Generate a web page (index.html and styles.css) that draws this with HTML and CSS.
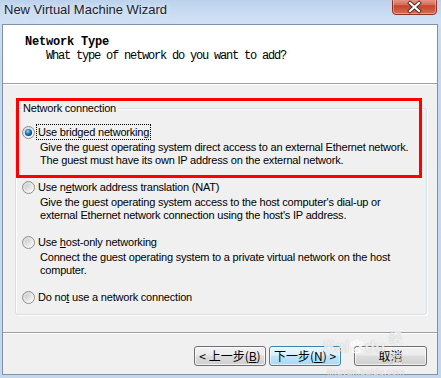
FILE: index.html
```html
<!DOCTYPE html>
<html>
<head>
<meta charset="utf-8">
<title>New Virtual Machine Wizard</title>
<link rel="stylesheet" href="styles.css">
</head>
<body>
<svg class="defs" width="0" height="0" aria-hidden="true">
  <defs>
    <linearGradient id="rOuter" x1="0" y1="0" x2="1" y2="1">
      <stop offset="0" stop-color="#d2d2d2"/>
      <stop offset="1" stop-color="#ffffff"/>
    </linearGradient>
    <linearGradient id="rInner" x1="0" y1="0" x2="1" y2="1">
      <stop offset="0" stop-color="#c9c9c9"/>
      <stop offset="1" stop-color="#f6f6f6"/>
    </linearGradient>
    <radialGradient id="rDot" cx="0.4" cy="0.35" r="0.7">
      <stop offset="0" stop-color="#9bdcfb"/>
      <stop offset="0.45" stop-color="#2a80c2"/>
      <stop offset="1" stop-color="#0b2f5c"/>
    </radialGradient>
    <linearGradient id="closeG" x1="0" y1="0" x2="0" y2="1">
      <stop offset="0" stop-color="#eab1a3"/>
      <stop offset="0.45" stop-color="#d86a55"/>
      <stop offset="0.5" stop-color="#c7432c"/>
      <stop offset="1" stop-color="#d6705b"/>
    </linearGradient>
  </defs>
</svg>
<div class="window">
  <div class="titlebar">
    <span class="title">New Virtual Machine Wizard</span>
    <div class="close">
      <svg width="45" height="15" viewBox="0 0 45 15">
        <rect x="0.5" y="-3" width="44" height="17.5" rx="3.5" fill="url(#closeG)" stroke="#8c3226"/>
        <rect x="1.5" y="-2" width="42" height="15.5" rx="2.5" fill="none" stroke="rgba(255,255,255,0.35)"/>
        <path d="M18 3 L27 11 M27 3 L18 11" stroke="#4a2a26" stroke-width="4" stroke-linecap="square"/>
        <path d="M18 3 L27 11 M27 3 L18 11" stroke="#ffffff" stroke-width="2.2" stroke-linecap="square"/>
      </svg>
    </div>
  </div>
  <div class="client">
    <div class="header">
      <div class="h-title">Network Type</div>
      <div class="h-sub">What type of network do you want to add?</div>
    </div>
    <div class="body">
      <fieldset class="group">
        <legend>Network connection</legend>
        <div class="opt">
          <div class="opt-row">
            <svg class="radio" width="13" height="13" viewBox="0 0 13 13"><circle cx="6.5" cy="6.5" r="6" fill="url(#rOuter)" stroke="#8e8f8f"/><circle cx="6.5" cy="6.5" r="3.6" fill="url(#rDot)"/></svg>
            <span class="lbl focus">Use bridged networking</span>
          </div>
          <div class="desc">Give the guest operating system direct access to an external Ethernet network.<br>The guest must have its own IP address on the external network.</div>
        </div>
        <div class="opt">
          <div class="opt-row">
            <svg class="radio" width="13" height="13" viewBox="0 0 13 13"><circle cx="6.5" cy="6.5" r="6" fill="url(#rOuter)" stroke="#8e8f8f"/><circle cx="6.5" cy="6.5" r="3.6" fill="url(#rInner)"/></svg>
            <span class="lbl">Use n<u>e</u>twork address translation (NAT)</span>
          </div>
          <div class="desc">Give the guest operating system access to the host computer's dial-up or<br>external Ethernet network connection using the host's IP address.</div>
        </div>
        <div class="opt">
          <div class="opt-row">
            <svg class="radio" width="13" height="13" viewBox="0 0 13 13"><circle cx="6.5" cy="6.5" r="6" fill="url(#rOuter)" stroke="#8e8f8f"/><circle cx="6.5" cy="6.5" r="3.6" fill="url(#rInner)"/></svg>
            <span class="lbl">Use <u>h</u>ost-only networking</span>
          </div>
          <div class="desc">Connect the guest operating system to a private virtual network on the host<br>computer.</div>
        </div>
        <div class="opt">
          <div class="opt-row">
            <svg class="radio" width="13" height="13" viewBox="0 0 13 13"><circle cx="6.5" cy="6.5" r="6" fill="url(#rOuter)" stroke="#8e8f8f"/><circle cx="6.5" cy="6.5" r="3.6" fill="url(#rInner)"/></svg>
            <span class="lbl">Do no<u>t</u> use a network connection</span>
          </div>
        </div>
      </fieldset>
    </div>
    <div class="sep"></div>
    <div class="buttons">
      <div class="btn btn-back">&lt; 上一步(<u>B</u>)</div>
      <div class="btn btn-next">下一步(<u>N</u>) &gt;</div>
      <div class="btn btn-cancel">取消</div>
    </div>
  </div>
  <div class="annot"></div>
  <div class="watermark">
    <div class="wm-top">Bai<svg class="paw" width="16" height="16" viewBox="0 0 16 16"><g fill="none" stroke="rgba(255,255,255,0.8)" stroke-width="1.6"><ellipse cx="4" cy="5" rx="1.6" ry="2.2"/><ellipse cx="8" cy="3" rx="1.6" ry="2.2"/><ellipse cx="12" cy="5" rx="1.6" ry="2.2"/><path d="M4 13 Q8 6 12 13 Q8 15 4 13Z"/></g></svg>du <span class="wm-cn">经验</span></div>
    <div class="wm-url">jingyan.baidu.com</div>
  </div>
</div>
</body>
</html>
```

FILE: styles.css
```css
html, body {
  margin: 0;
  padding: 0;
}

body {
  width: 441px;
  height: 378px;
  overflow: hidden;
  background: #c2d6ed;
}

.defs {
  position: absolute;
  width: 0;
  height: 0;
}

.window {
  position: relative;
  width: 441px;
  height: 378px;
  background: linear-gradient(#bcd2ec 0, #cfe0f3 20px, #c6d9ef 60px, #c3d7ee 100%);
  display: flex;
  flex-direction: column;
}

.titlebar {
  height: 24px;
  display: flex;
  justify-content: space-between;
  align-items: flex-start;
  flex: none;
}

.title {
  font-family: "Liberation Sans", Arial, sans-serif;
  font-size: 13px;
  line-height: 20px;
  color: #1a2331;
  padding-left: 4px;
  text-shadow: 0 0 6px rgba(255, 255, 255, 0.9);
}

.close {
  margin-right: 4px;
  height: 15px;
  line-height: 0;
}

.client {
  margin: 0 3px 0 2px;
  height: 351px;
  box-sizing: border-box;
  border: 1px solid #7f93a8;
  background: #f0f0f0;
  display: flex;
  flex-direction: column;
  flex: none;
}

.header {
  height: 59px;
  box-sizing: border-box;
  background: #ffffff;
  border-bottom: 1px solid #a0a0a0;
  box-shadow: 0 1px 0 #ffffff;
  padding-top: 10px;
  font-family: "Liberation Mono", "Courier New", monospace;
  color: #000;
  flex: none;
}

.h-title {
  font-size: 12px;
  font-weight: bold;
  letter-spacing: -0.2px;
  line-height: 14px;
  padding-left: 22px;
}

.h-sub {
  font-size: 12px;
  letter-spacing: -1.2px;
  line-height: 14px;
  padding-left: 43px;
}

.body {
  height: 247px;
  box-sizing: border-box;
  margin-top: 1px;
  padding: 17px 10px 0 12px;
  flex: none;
}

.group {
  margin: 0;
  padding: 2px 0 10px 6px;
  border: 1px solid #d5dfe5;
  border-radius: 3px;
  box-shadow: inset 1px 1px 0 #ffffff, 1px 1px 0 #ffffff;
  height: 213px;
  box-sizing: border-box;
  font-family: "Liberation Sans", Arial, sans-serif;
  font-size: 11px;
  letter-spacing: -0.2px;
  color: #000;
}

.group legend {
  padding: 0 2px 0 1px;
  line-height: 13px;
}

.opt {
  margin-top: 7px;
}

.opt + .opt {
  margin-top: 12px;
}

.opt-row {
  display: flex;
  align-items: center;
  height: 16px;
}

.radio {
  flex: none;
  margin-right: 2px;
}

.lbl {
  line-height: 14px;
  padding: 0 1px;
}

.lbl.focus {
  outline: 1px dotted #000;
  outline-offset: 0;
}

.lbl u {
  text-underline-offset: 1px;
}

.desc {
  margin-top: 1px;
  padding-left: 18px;
  line-height: 13px;
}

.sep {
  height: 1px;
  background: #a0a0a0;
  border-bottom: 1px solid #ffffff;
  flex: none;
}

.buttons {
  display: flex;
  justify-content: flex-end;
  padding: 12px 10px 0 0;
}

.btn {
  height: 20px;
  box-sizing: border-box;
  border: 1px solid #707070;
  border-radius: 3px;
  background: linear-gradient(#f2f2f2 0, #ebebeb 45%, #dddddd 50%, #cfcfcf 100%);
  box-shadow: inset 0 0 0 1px rgba(255, 255, 255, 0.7);
  font-family: "Noto Sans CJK SC", "Liberation Sans", sans-serif;
  font-size: 12px;
  line-height: 18px;
  text-align: center;
  color: #000;
}

.btn u {
  text-underline-offset: 1px;
}

.btn-back {
  width: 72px;
}

.btn-next {
  width: 72px;
  margin-left: 3px;
  border-color: #3c7fb1;
  background: linear-gradient(#eaf6fd 0, #d9f0fc 45%, #bee6fd 50%, #a7d9f5 100%);
  box-shadow: inset 0 0 0 1px rgba(255, 255, 255, 0.6);
}

.btn-cancel {
  width: 73px;
  margin-left: 13px;
}

.annot {
  position: absolute;
  left: 16px;
  top: 98px;
  width: 406px;
  height: 80px;
  box-sizing: border-box;
  border: 3px solid #ff0000;
  pointer-events: none;
}

.watermark {
  position: absolute;
  left: 323px;
  top: 327px;
  width: 92px;
  color: rgba(255, 255, 255, 0.75);
  text-shadow: 0 0 1px rgba(120, 120, 120, 0.5);
  font-family: "Liberation Sans", Arial, sans-serif;
  pointer-events: none;
}

.wm-top {
  display: flex;
  align-items: center;
  font-size: 17px;
  font-weight: bold;
  line-height: 20px;
}

.wm-cn {
  font-family: "Noto Sans CJK SC", sans-serif;
  font-size: 14px;
  font-weight: normal;
  margin-left: 3px;
}

.wm-url {
  font-size: 9px;
  line-height: 10px;
  padding-left: 4px;
  letter-spacing: 0.3px;
}
```
